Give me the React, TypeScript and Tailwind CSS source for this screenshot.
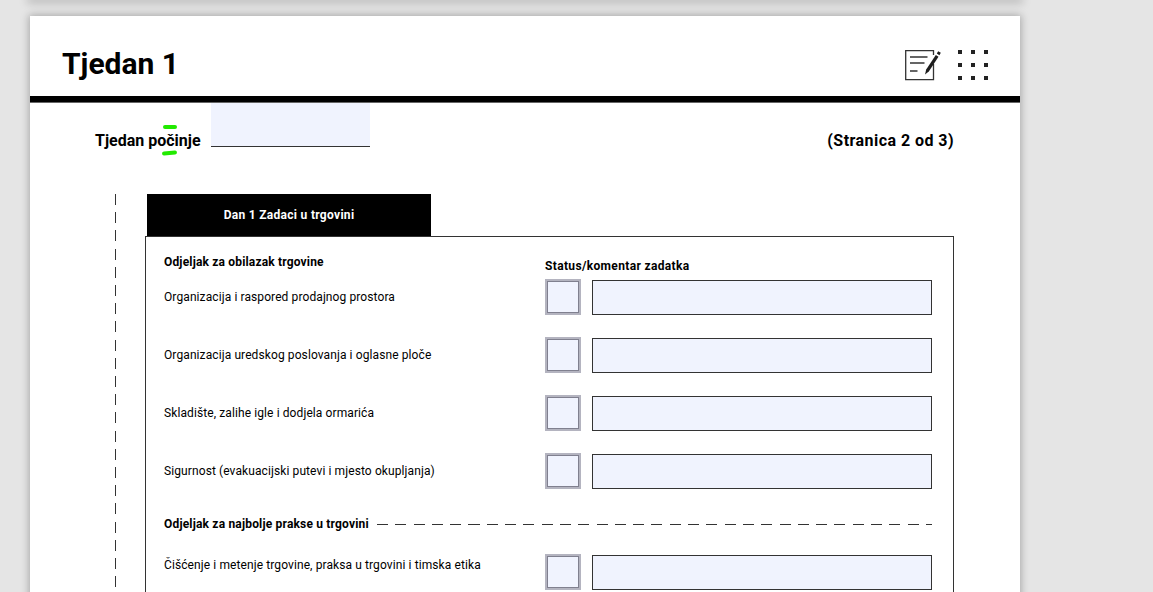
import * as React from "react"

const font = { fontFamily: 'Roboto, "Liberation Sans", Arial, sans-serif' }

function NoteIcon() {
  return (
    <svg width="36" height="31" viewBox="0 0 36 31" fill="none" className="shrink-0">
      <path d="M28.5 5 V0.7 H0.7 V29.7 H28.5 V14" stroke="#333" strokeWidth="1.3" />
      <path d="M5 7 H22.5 M5 13 H19.5 M5 21 H12.5" stroke="#333" strokeWidth="1.4" />
      <path d="M20 24.5 L21.2 19.5 L30.8 5 L33.5 6.8 L23.8 21.5 Z" fill="#1c1c1c" />
      <path d="M31.8 3.6 L33.2 1.2 L35.8 2.8 L34.4 5.2 Z" fill="#1c1c1c" />
    </svg>
  )
}

function GridIcon() {
  return (
    <div className="grid grid-cols-3 gap-[9px] shrink-0">
      {Array.from({ length: 9 }).map((_, i) => (
        <div key={i} className="w-[4px] h-[4px] bg-[#222]" />
      ))}
    </div>
  )
}

function Fields() {
  return (
    <div className="flex gap-[11px] shrink-0">
      <div className="w-[36px] h-[36px] bg-[#f0f3fe] border-2 border-[#b4b4c0] shadow-[inset_0_0_0_1px_#80808f]" />
      <div className="w-[340px] h-[35px] mt-px bg-[#f0f3fe] border border-[#333]" />
    </div>
  )
}

function TaskRow({ label, offset }: { label: string; offset?: boolean }) {
  return (
    <div className={offset ? "flex justify-between items-start" : "flex justify-between items-center"}>
      <span className={offset ? "text-[12px] tracking-[0.1px] leading-[20px] mt-[1px]" : "text-[12px] tracking-[0.1px] leading-[20px] -mt-[1px]"}>{label}</span>
      <Fields />
    </div>
  )
}

export default function App() {
  return (
    <div className="relative w-[1153px] h-[592px] overflow-hidden bg-[#e5e5e5] text-black" style={font}>
      <div className="ml-[30px] w-[990px] h-0 shadow-[0_0_8px_3px_rgba(0,0,0,0.22)]" />
      <div className="ml-[30px] mt-[16px] w-[990px] h-[600px] bg-white shadow-[0_0_8px_1px_rgba(0,0,0,0.28)]">
        <header className="h-[86px] flex items-start justify-between px-[32px] border-b-[6px] border-black shadow-[0_1px_0_#666]">
          <h1 className="text-[30px] font-bold leading-none mt-[33px]">Tjedan 1</h1>
          <div className="flex items-start gap-[17px] mt-[34px]">
            <NoteIcon />
            <GridIcon />
          </div>
        </header>

        <div className="flex items-end justify-between pl-[65px] pr-[66px] h-[45px]">
          <div className="flex items-end gap-[10px]">
            <span className="relative text-[16px] font-bold leading-none mb-[-2px]">
              Tjedan počinje
              <span className="absolute left-[68px] -top-[8px] w-[14px] h-[4px] rounded-full bg-[#22ea00]" />
              <span className="absolute left-[67px] top-[18px] w-[15px] h-[4px] rounded-full -rotate-6 bg-[#22ea00]" />
            </span>
            <div className="w-[159px] h-[44px] bg-[#f0f3fe] border-b border-[#333]" />
          </div>
          <span className="text-[16px] tracking-[0.45px] font-bold leading-none mb-[-2px]">(Stranica 2 od 3)</span>
        </div>

        <div className="flex mt-[47px] pl-[85px]">
          <div className="w-px mr-[29px] shrink-0 bg-[repeating-linear-gradient(to_bottom,#333_0,#333_11px,transparent_11px,transparent_18.2px)]" />
          <div className="flex-1 pr-[66px]">
            <div className="ml-[2px] w-[284px] h-[42px] bg-black text-white flex items-center justify-center text-[12px] tracking-[0.3px] font-bold">
              Dan 1 Zadaci u trgovini
            </div>
            <section className="border border-[#333] h-[500px] pl-[18px] pr-[21px] pt-[17px]">
              <div className="flex justify-between">
                <h2 className="text-[12px] tracking-[0.17px] font-bold leading-[16px]">Odjeljak za obilazak trgovine</h2>
                <h2 className="w-[387px] text-[12px] tracking-[0.35px] font-bold leading-[16px] mt-[4px]">Status/komentar zadatka</h2>
              </div>
              <div className="flex flex-col gap-[22px] mt-[5px]">
                <TaskRow label="Organizacija i raspored prodajnog prostora" />
                <TaskRow label="Organizacija uredskog poslovanja i oglasne ploče" />
                <TaskRow label="Skladište, zalihe igle i dodjela ormarića" />
                <TaskRow label="Sigurnost (evakuacijski putevi i mjesto okupljanja)" />
              </div>
              <div className="flex items-center gap-[8px] mt-[27px]">
                <h2 className="text-[12px] tracking-[0.18px] font-bold leading-[16px] shrink-0">Odjeljak za najbolje prakse u trgovini</h2>
                <div className="flex-1 h-px bg-[repeating-linear-gradient(to_right,#333_0,#333_11px,transparent_11px,transparent_18.3px)]" />
              </div>
              <div className="mt-[22px]">
                <TaskRow offset label="Čišćenje i metenje trgovine, praksa u trgovini i timska etika" />
              </div>
            </section>
          </div>
        </div>
      </div>
    </div>
  )
}
